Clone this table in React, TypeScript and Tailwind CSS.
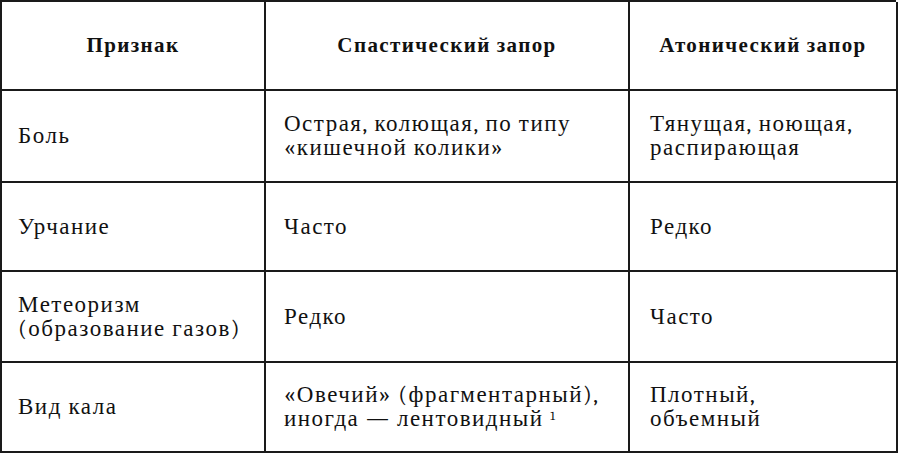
export default function App() {
  const serif = "font-serif [font-family:Liberation_Serif,serif] font-['Liberation_Serif']";
  const body = `${serif} text-[23px] leading-[24px] tracking-[1.5px]`;
  const head = `${serif} text-[21px] font-bold tracking-[1.4px]`;

  return (
    <div className="w-[898px] h-[454px] bg-white text-[#111] font-serif">
      <div className="grid grid-cols-[264px_364px_268px] w-[896px] border-l-2 border-t-2 border-[#1a1a1a]">
        <div className="flex h-[89px] items-center justify-center border-r-2 border-b-2 border-[#1a1a1a]">
          <span className={head}>Признак</span>
        </div>
        <div className="flex h-[89px] items-center justify-center border-r-2 border-b-2 border-[#1a1a1a]">
          <span className={head}>Спастический запор</span>
        </div>
        <div className="flex h-[89px] items-center justify-center border-r-2 border-b-2 border-[#1a1a1a]">
          <span className={head}>Атонический запор</span>
        </div>

        <div className="flex h-[92px] flex-col justify-center border-r-2 border-b-2 border-[#1a1a1a] pl-[16px]">
          <div className={body}>Боль</div>
        </div>
        <div className="flex h-[92px] flex-col justify-center border-r-2 border-b-2 border-[#1a1a1a] pl-[18px]">
          <div className={body}>Острая, колющая, по типу</div>
          <div className={body}>«кишечной колики»</div>
        </div>
        <div className="flex h-[92px] flex-col justify-center border-r-2 border-b-2 border-[#1a1a1a] pl-[20px]">
          <div className={body}>Тянущая, ноющая,</div>
          <div className={body}>распирающая</div>
        </div>

        <div className="flex h-[89px] flex-col justify-center border-r-2 border-b-2 border-[#1a1a1a] pl-[16px]">
          <div className={body}>Урчание</div>
        </div>
        <div className="flex h-[89px] flex-col justify-center border-r-2 border-b-2 border-[#1a1a1a] pl-[18px]">
          <div className={body}>Часто</div>
        </div>
        <div className="flex h-[89px] flex-col justify-center border-r-2 border-b-2 border-[#1a1a1a] pl-[20px]">
          <div className={body}>Редко</div>
        </div>

        <div className="flex h-[91px] flex-col justify-center border-r-2 border-b-2 border-[#1a1a1a] pl-[16px]">
          <div className={body}>Метеоризм</div>
          <div className={body}>(образование газов)</div>
        </div>
        <div className="flex h-[91px] flex-col justify-center border-r-2 border-b-2 border-[#1a1a1a] pl-[18px]">
          <div className={body}>Редко</div>
        </div>
        <div className="flex h-[91px] flex-col justify-center border-r-2 border-b-2 border-[#1a1a1a] pl-[20px]">
          <div className={body}>Часто</div>
        </div>

        <div className="flex h-[90px] flex-col justify-center border-r-2 border-b-2 border-[#1a1a1a] pl-[16px]">
          <div className={body}>Вид кала</div>
        </div>
        <div className="flex h-[90px] flex-col justify-center border-r-2 border-b-2 border-[#1a1a1a] pl-[18px]">
          <div className={body}>«Овечий» (фрагментарный),</div>
          <div className={body}>
            иногда — лентовидный <sup className="text-[13px]">1</sup>
          </div>
        </div>
        <div className="flex h-[90px] flex-col justify-center border-r-2 border-b-2 border-[#1a1a1a] pl-[20px]">
          <div className={body}>Плотный,</div>
          <div className={body}>объемный</div>
        </div>
      </div>
    </div>
  );
}
